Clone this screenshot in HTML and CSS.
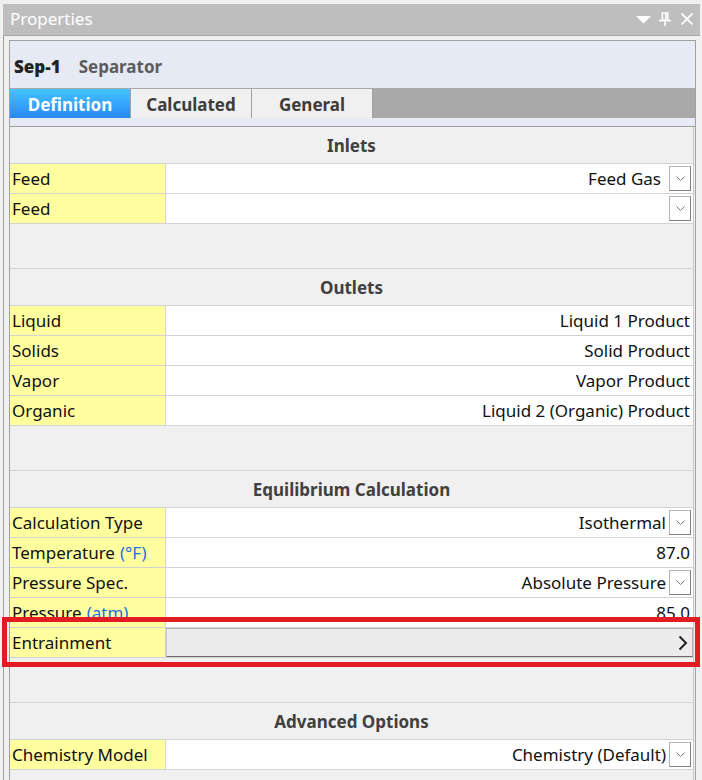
FILE: index.html
```html
<!DOCTYPE html>
<html lang="en">
  <head>
    <meta charset="utf-8" />
    <title>Properties</title>
    <link rel="stylesheet" href="styles.css">
  </head>
  <body>
    <div class="window">
      <!-- Docked pane title bar -->
      <div class="titlebar">
        <span class="caption">Properties</span>
        <div class="tools">
          <svg width="15" height="8" viewBox="0 0 15 8"><polygon points="0,0 15,0 7.5,7.5" fill="#fff"/></svg>
          <svg width="12" height="14" viewBox="0 0 12 14" fill="none" stroke="#fff" stroke-width="1.6">
            <path d="M3.3 1h5.4v7.2H3.3z"/>
            <path d="M6.8 1v7.2"/>
            <path d="M0 8.6h12"/>
            <path d="M6 8.6V14"/>
          </svg>
          <svg width="12" height="12" viewBox="0 0 12 12" stroke="#fff" stroke-width="1.7"><path d="M0.5 0.5l11 11M11.5 0.5l-11 11"/></svg>
        </div>
      </div>

      <div class="panel">
        <div class="inner">
          <div class="head">
            <div class="object"><b>Sep-1</b><span>Separator</span></div>
            <div class="tabs">
              <div class="tab active">Definition</div>
              <div class="tab">Calculated</div>
              <div class="tab">General</div>
            </div>
            <div class="strip"></div>
          </div>

          <div class="grid">
            <div class="section">Inlets</div>
            <div class="row">
              <div class="label">Feed</div>
              <div class="value wide">Feed Gas<span class="combo"><svg width="9" height="5" viewBox="0 0 9 5"><path d="M0.5 0.5l4 4 4-4" fill="none" stroke="#777"/></svg></span></div>
            </div>
            <div class="row">
              <div class="label">Feed</div>
              <div class="value"><span class="combo"><svg width="9" height="5" viewBox="0 0 9 5"><path d="M0.5 0.5l4 4 4-4" fill="none" stroke="#777"/></svg></span></div>
            </div>
            <div class="gap"></div>

            <div class="section">Outlets</div>
            <div class="row">
              <div class="label">Liquid</div>
              <div class="value plain">Liquid 1 Product</div>
            </div>
            <div class="row">
              <div class="label">Solids</div>
              <div class="value plain">Solid Product</div>
            </div>
            <div class="row">
              <div class="label">Vapor</div>
              <div class="value plain">Vapor Product</div>
            </div>
            <div class="row">
              <div class="label">Organic</div>
              <div class="value plain">Liquid 2 (Organic) Product</div>
            </div>
            <div class="gap"></div>

            <div class="section">Equilibrium Calculation</div>
            <div class="row">
              <div class="label">Calculation Type</div>
              <div class="value">Isothermal<span class="combo"><svg width="9" height="5" viewBox="0 0 9 5"><path d="M0.5 0.5l4 4 4-4" fill="none" stroke="#777"/></svg></span></div>
            </div>
            <div class="row">
              <div class="label">Temperature <span class="unit">(°F)</span></div>
              <div class="value plain">87.0</div>
            </div>
            <div class="row">
              <div class="label">Pressure Spec.</div>
              <div class="value">Absolute Pressure<span class="combo"><svg width="9" height="5" viewBox="0 0 9 5"><path d="M0.5 0.5l4 4 4-4" fill="none" stroke="#777"/></svg></span></div>
            </div>
            <div class="row">
              <div class="label">Pressure <span class="unit">(atm)</span></div>
              <div class="value plain">85.0</div>
            </div>
            <div class="row">
              <div class="label">Entrainment</div>
              <div class="value button">
                <svg width="10" height="16" viewBox="0 0 10 16"><path d="M1.5 1.5l6.5 6.5-6.5 6.5" fill="none" stroke="#222" stroke-width="2"/></svg>
              </div>
            </div>
            <div class="gap"></div>

            <div class="section">Advanced Options</div>
            <div class="row">
              <div class="label">Chemistry Model</div>
              <div class="value">Chemistry (Default)<span class="combo"><svg width="9" height="5" viewBox="0 0 9 5"><path d="M0.5 0.5l4 4 4-4" fill="none" stroke="#777"/></svg></span></div>
            </div>
            <div class="tail"></div>
          </div>
        </div>
      </div>

      <!-- Red callout around the Entrainment row -->
      <div class="highlight"></div>
    </div>
  </body>
</html>
```

FILE: styles.css
```css
body {
  margin: 0;
  background: #f0f0f0;
  font-family: "Noto Sans", "Open Sans", sans-serif;
  font-size: 17px;
  color: #111;
}

.window {
  position: relative;
  height: 780px;
  padding: 4px 2px 0 3px;
  box-sizing: border-box;
  overflow: hidden;
}

/* Title bar */
.titlebar {
  display: flex;
  align-items: center;
  height: 32px;
  padding: 0 7px 2px 7px;
  box-sizing: border-box;
  background: #bebebe;
  border-bottom: 1px solid #a8a8a8;
  color: #fff;
  font-size: 17px;
}

.titlebar .caption {
  flex: 1;
}

.tools {
  display: flex;
  align-items: center;
  gap: 8px;
}

.tools svg:first-child {
  margin-top: 3px;
}

.tools svg:nth-child(2) {
  margin-right: 2px;
}

/* Pane body */
.panel {
  border-left: 1px solid #a0a0a0;
  padding: 4px 0 0 5px;
  height: 744px;
}

.inner {
  height: 100%;
  margin-right: 4px;
  border: 1px solid #a0a0a0;
  border-bottom: none;
}

.head {
  background: #e6eaf5;
}

.object {
  display: flex;
  align-items: center;
  gap: 18px;
  height: 47px;
  padding: 3px 0 0 4px;
  box-sizing: border-box;
  font-size: 17px;
  font-weight: bold;
  color: #222;
}

.object span {
  color: #5c5c5c;
}

.tabs {
  display: flex;
  height: 30px;
  padding-top: 1px;
  box-sizing: border-box;
  background: #a9a9a9;
}

.tab {
  width: 120px;
  display: flex;
  align-items: center;
  justify-content: center;
  padding-top: 1px;
  background: #f0f0f0;
  border-right: 1px solid #a0a0a0;
  color: #3c3c3c;
  font-weight: bold;
}

.tab.active {
  background: linear-gradient(#43c4ff, #2a88f6);
  color: #fff;
}

.strip {
  height: 8px;
  border-bottom: 1px solid #a0a0a0;
}

/* Property grid */
.grid {
  margin-right: 1px;
  border-right: 1px solid #c8c8c8;
  background: #f0f0f0;
  height: 100%;
}

.section {
  height: 36px;
  display: flex;
  align-items: center;
  justify-content: center;
  border-bottom: 1px solid #d3d3d3;
  font-weight: bold;
  color: #404040;
}

.gap {
  height: 44px;
  border-bottom: 1px solid #d3d3d3;
}

.row {
  display: grid;
  grid-template-columns: 156px 1fr;
  height: 29px;
  border-bottom: 1px solid #d3d3d3;
}

.label {
  display: flex;
  align-items: center;
  gap: 5px;
  padding-left: 2px;
  background: #ffffa0;
  border-right: 1px solid #d3d3d3;
  white-space: nowrap;
}

.unit {
  color: #1f6fe0;
}

.value {
  display: flex;
  align-items: center;
  justify-content: flex-end;
  padding-right: 2px;
  background: #fff;
  white-space: nowrap;
}

.value.plain {
  padding-right: 3px;
}

.combo {
  display: flex;
  align-items: center;
  justify-content: center;
  width: 20px;
  height: 23px;
  margin-left: 3px;
  background: #fff;
  border: 1px solid #b4b4b4;
  border-right-color: #808080;
  border-bottom-color: #808080;
}

.value.wide .combo {
  margin-left: 8px;
}

.value.button {
  padding: 0 4px 0 0;
  background: #ececec;
  border: 1px solid #b0b0b0;
  border-bottom-color: #6c6c6c;
  border-left-color: #c8c8c8;
}

.tail {
  height: 20px;
}

.highlight {
  position: absolute;
  left: 2px;
  top: 617px;
  width: 698px;
  height: 50px;
  box-sizing: border-box;
  border: 5px solid #e31b23;
}
```
